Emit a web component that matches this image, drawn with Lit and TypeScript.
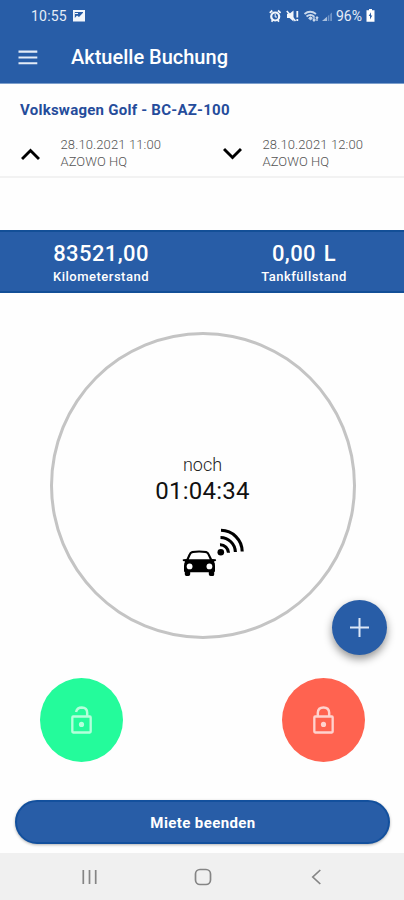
import { LitElement, html, css, svg } from "lit";
import { customElement } from "lit/decorators.js";

const lockBody = svg`<path fill-rule="evenodd" d="M5.5 8H18.5A1.6 1.6 0 0 1 20 9.6V20.6A1.6 1.6 0 0 1 18.5 22.2H5.5A1.6 1.6 0 0 1 4 20.6V9.6A1.6 1.6 0 0 1 5.5 8ZM5.8 9.9V20.3H18.2V9.9Z"/><circle cx="12" cy="15" r="2"/>`;

@customElement("app-root")
export class AppRoot extends LitElement {
  static styles = css`
    :host {
      display: flex;
      flex-direction: column;
      width: 404px;
      height: 900px;
      overflow: hidden;
      background: #fefefe;
      font-family: Roboto, "Liberation Sans", sans-serif;
      color: #000;
    }
    * { box-sizing: border-box; }
    svg { display: block; flex: none; }
    span { white-space: nowrap; }
    .top { height: 84px; flex: none; background: #285da7; border-bottom: 1px solid #7d9fcc; color: #fff; }
    .status { height: 31px; display: flex; align-items: center; padding: 0 29px 0 31px; color: #e6edf7; }
    .clock { font-size: 14px; letter-spacing: 0.2px; width: 41px; }
    .grow { flex: 1; }
    .tray { display: flex; align-items: center; gap: 1px; }
    .pct { font-size: 14px; letter-spacing: 0; width: 29px; }
    .bar { height: 52px; display: flex; align-items: center; padding-left: 18px; }
    .title { font-size: 20px; font-weight: 500; letter-spacing: 0; margin-left: 33px; }
    .trip { height: 94px; flex: none; border-bottom: 2px solid #f2f2f2; padding-top: 16px; }
    .vehicle { display: block; height: 20px; line-height: 20px; margin-left: 20px; font-size: 15px; font-weight: 700; letter-spacing: 0.25px; color: #254c9b; }
    .legs { display: flex; margin-top: 16px; }
    .leg { width: 202px; display: flex; padding-left: 21px; }
    .leg svg { margin-top: 10px; }
    .where { display: flex; flex-direction: column; margin-left: 20.5px; font-size: 13px; font-weight: 300; line-height: 17px; color: #555; }
    .date { letter-spacing: 0.12px; }
    .place { letter-spacing: 0.05px; }
    .stats { flex: none; margin-top: 52px; height: 63px; background: #285da7; border-top: 2px solid #134f97; border-bottom: 2px solid #134f97; color: #fff; display: flex; }
    .stat { width: 202px; display: flex; flex-direction: column; align-items: center; padding-top: 9px; }
    .stat + .stat { padding-left: 2px; }
    .value { font-size: 22px; font-weight: 500; line-height: 26px; letter-spacing: 0.4px; word-spacing: 2px; }
    .label { font-size: 13px; font-weight: 500; line-height: 19px; letter-spacing: 0.5px; }
    .dial { flex: none; align-self: center; margin: 39px 0 0 1px; width: 306px; height: 307px; border: 3px solid #c4c4c4; border-radius: 50%; display: flex; flex-direction: column; align-items: center; padding-top: 119px; position: relative; }
    .noch { font-size: 18px; font-weight: 300; line-height: 22px; color: #222; }
    .time { font-size: 24px; line-height: 31px; font-weight: 400; letter-spacing: 0.25px; color: #111; }
    .car { margin: 21px 0 0 21px; }
    .fab { position: absolute; left: 279px; top: 265px; width: 55px; height: 55px; border-radius: 50%; background: #285da7; box-shadow: 0 4px 9px rgba(0,0,0,.42); display: flex; align-items: center; justify-content: center; }
    .locks { flex: none; display: flex; justify-content: space-between; padding: 0 39px 0 40px; margin-top: 39px; }
    .round { width: 83px; height: 84px; border-radius: 50%; display: flex; align-items: center; justify-content: center; }
    .open { background: #24fb9b; }
    .shut { background: #ff6350; }
    .end { flex: none; margin: 38px 14px 0 15px; height: 44px; border-radius: 22px; background: #285da7; border: 2px solid #13509d; box-shadow: 0 1px 3px rgba(0,0,0,.3); color: #fff; display: flex; align-items: center; justify-content: center; font-size: 15px; font-weight: 700; letter-spacing: 0.4px; padding: 1px 0 0 1px; }
    .nav { margin-top: 9px; flex: 1; background: #f0f0f0; display: flex; align-items: center; padding-left: 81px; }
    .home { margin-left: 95.5px; }
    .back { margin-left: 99px; }
  `;

  private chevron(d: string) {
    return html`<svg width="19" height="17" viewBox="0 0 19 17" fill="none" stroke="#000" stroke-width="2.9"><path d=${d} /></svg>`;
  }

  private leg(d: string, date: string) {
    return html`<div class="leg">${this.chevron(d)}
      <div class="where"><span class="date">${date}</span><span class="place">AZOWO HQ</span></div></div>`;
  }

  private stat(value: string, label: string) {
    return html`<div class="stat"><span class="value">${value}</span><span class="label">${label}</span></div>`;
  }

  render() {
    return html`
      <header class="top">
        <div class="status">
          <span class="clock">10:55</span>
          <svg width="14" height="14" viewBox="0 0 14 14"><path fill="#f2f6fb" fill-rule="evenodd" d="M1 1H13V12.5H1ZM2.8 3V9L5 6.5L7 8L11 3.8V3Z"/><path d="M3 4.5H6" stroke="#f2f6fb"/></svg>
          <span class="grow"></span>
          <div class="tray">
            <svg width="66" height="14" viewBox="0 0 66 14" fill="none" stroke="#f2f6fb">
              <circle cx="6.2" cy="7.5" r="4" stroke-width="2.2"/><path stroke-width="1.8" d="M.8 3.8L3.3 1.5M9 1.5L11.6 3.8M2.5 12.6L4 11M10 12.6L8.5 11"/><path d="M6.2 5V8H8"/>
              <path fill="#f2f6fb" stroke="none" d="M18 4.8H20.5L24.5 1.5V12.5L20.5 9H18Z"/><path stroke-width="1.6" d="M17.8 2L26.5 12"/><path stroke-width="1.8" d="M28.3 2V8.5M28.3 10V12"/>
              <g stroke="#cbdaed"><path stroke-width="1.8" d="M35.5 5Q41 .5 47 5M37.5 7.5Q41.5 4.5 45 7.5"/><path fill="#cbdaed" d="M39.7 9.2L41.5 7.8L43.4 9.2L41.5 11Z"/><path stroke-width="1.3" d="M45 7V12M43.8 10.5L45 12L46.5 10.5M48 12V8M46.8 9.2L48 8L49.2 9.2"/></g>
              <path fill="#a8bfdd" stroke="none" d="M53 12L58 7.8V12Z"/><path fill="#6f93c6" stroke="none" d="M58.8 7L60.3 5.7V12H58.8ZM61.2 5L63 3.5V12H61.2Z"/>
            </svg>
            <span class="pct">96%</span>
            <svg width="9" height="13" viewBox="0 0 9 13"><path fill="#fff" fill-rule="evenodd" d="M3 0H6V1.2H8.5V12.8H.5V1.2H3ZM5 3.2L2.7 7H4V10.5L6.3 6.5H5Z"/></svg>
          </div>
        </div>
        <div class="bar">
          <svg width="20" height="15" viewBox="0 0 20 15" fill="#e4ecf7"><path d="M.5.6H19.3V2.7H.5ZM.5 6.4H19.3V8.5H.5ZM.5 12.2H19.3V14.3H.5Z"/></svg>
          <span class="title">Aktuelle Buchung</span>
        </div>
      </header>
      <section class="trip">
        <span class="vehicle">Volkswagen Golf - BC-AZ-100</span>
        <div class="legs">
          ${this.leg("M1 13L9.5 4.5L18 13", "28.10.2021 11:00")}
          ${this.leg("M1 3L9.5 11.5L18 3", "28.10.2021 12:00")}
        </div>
      </section>
      <section class="stats">
        ${this.stat("83521,00", "Kilometerstand")}
        ${this.stat("0,00 L", "Tankfüllstand")}
      </section>
      <section class="dial">
        <span class="noch">noch</span>
        <span class="time">01:04:34</span>
        <svg class="car" width="62" height="50" viewBox="0 0 62 50">
          <path fill-rule="evenodd" d="M4.5 31L6.5 26.5Q7.5 23.6 10 23Q17 21.8 24.5 23Q26.8 23.6 27.8 26.5L30 31L33.5 31.2Q35 32.5 33 33.2L31.8 33.6Q33.2 35 33 38V43.8H32.2V46.5Q32.2 48 30.6 48H28.6Q26.8 48 26.8 46.3V44.3H8.2V46.3Q8.2 48 6.4 48H4.4Q2.8 48 2.8 46.3V43.8H2V38Q2 35 3.2 33.6L1 33Q0 31.5 1.5 31.2ZM6.8 31.3H27.7L25.6 26.8Q25 25.2 23.2 25Q17 24.2 11.2 25Q9.4 25.2 8.8 26.8Z"/>
          <circle cx="7.6" cy="38.4" r="2.9" fill="#fff"/><circle cx="27.4" cy="38.4" r="2.9" fill="#fff"/>
          <circle cx="38.8" cy="24.2" r="3.3"/>
          <g fill="none" stroke="#000" stroke-width="3.1"><path d="M38 16.8A8.2 8.2 0 0 1 46.5 24.8"/><path d="M38.5 9.5A15 15 0 0 1 53.4 24"/><path d="M39 2.3A21.5 21.5 0 0 1 60.2 23.5"/></g>
        </svg>
        <div class="fab"><svg width="19" height="19" viewBox="0 0 19 19" stroke="#dce7f7" stroke-width="2"><path d="M9.5 0V19M0 9.5H19"/></svg></div>
      </section>
      <section class="locks">
        <div class="round open"><svg width="31" height="31" viewBox="0 0 24 24" fill="#b5ffdb"><path fill="none" stroke="#b5ffdb" stroke-width="1.9" d="M7.8 5.4Q8.6 1.9 12.2 1.9Q16.4 2 16.4 6V9"/>${lockBody}</svg></div>
        <div class="round shut"><svg width="31" height="31" viewBox="0 0 24 24" fill="#ffd3ce"><path fill="none" stroke="#ffd3ce" stroke-width="1.9" d="M7.6 9V6Q7.8 1.9 12 1.9T16.4 6V9"/>${lockBody}</svg></div>
      </section>
      <div class="end"><span>Miete beenden</span></div>
      <nav class="nav">
        <svg width="17" height="16" viewBox="0 0 17 16" stroke="#858585" stroke-width="1.7"><path d="M2.3 1V15M8.5 1V15M14.7 1V15"/></svg>
        <svg class="home" width="18" height="18" viewBox="0 0 18 18" fill="none" stroke="#858585" stroke-width="1.7"><rect x="1.5" y="1.5" width="15" height="15" rx="4.5"/></svg>
        <svg class="back" width="11" height="16" viewBox="0 0 11 16" fill="none" stroke="#858585" stroke-width="1.7"><path d="M9.3 1L1.8 8L9.3 15"/></svg>
      </nav>
    `;
  }
}
